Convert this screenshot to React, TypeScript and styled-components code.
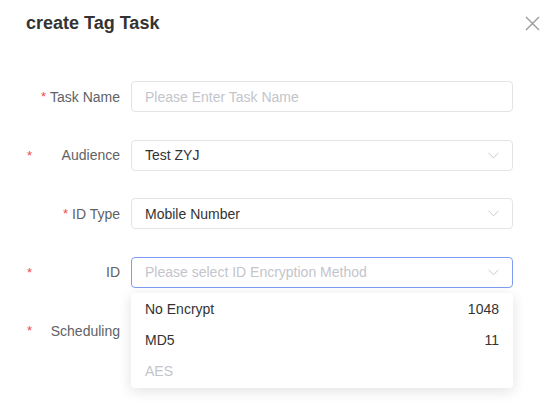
import React from "react";
import styled, { createGlobalStyle } from "styled-components";

const GlobalStyle = createGlobalStyle`
  html, body {
    margin: 0;
    padding: 0;
    background: #ffffff;
  }
  body {
    font-family: "Liberation Sans", Arial, sans-serif;
    -webkit-font-smoothing: antialiased;
  }
  * { box-sizing: border-box; }
`;

const Dialog = styled.div`
  width: 552px;
  height: 411px;
  background: #fff;
  padding: 13px 0 0 26px;
  overflow: hidden;
`;

const Header = styled.div`
  display: flex;
  align-items: center;
  justify-content: space-between;
  padding-right: 12px;
  height: 20px;
`;

const Title = styled.h2`
  margin: 0;
  font-size: 18px;
  font-weight: 700;
  color: #333333;
  line-height: 20px;
`;

const CloseButton = styled.button`
  width: 16px;
  height: 16px;
  border: 0;
  padding: 0;
  background: transparent;
  display: flex;
  align-items: center;
  justify-content: center;
  cursor: pointer;
`;

const Form = styled.div`
  display: flex;
  flex-direction: column;
  gap: 27.6px;
  margin-top: 48px;
`;

const Row = styled.div`
  display: flex;
  align-items: center;
  height: 31px;
`;

const Label = styled.label<{ $spread?: boolean }>`
  width: 94px;
  margin-right: 11px;
  display: flex;
  align-items: center;
  justify-content: ${(p) => (p.$spread ? "space-between" : "flex-end")};
  padding-left: ${(p) => (p.$spread ? "1px" : "0")};
  font-size: 14px;
  color: #606266;
  white-space: nowrap;
`;

const Star = styled.span`
  color: #f04a4a;
  font-size: 13px;
  margin-right: 4px;
`;

const Field = styled.div`
  position: relative;
  width: 382px;
  height: 31px;
`;

const Box = styled.div<{ $focus?: boolean }>`
  height: 100%;
  border: 1px solid ${(p) => (p.$focus ? "#7f9cf5" : "#e3e4e8")};
  border-radius: 4px;
  display: flex;
  align-items: center;
  padding: 0 13px;
  font-size: 14px;
  background: #fff;
`;

const Value = styled.span<{ $placeholder?: boolean }>`
  flex: 1;
  color: ${(p) => (p.$placeholder ? "#c3c5cb" : "#333333")};
`;

const Menu = styled.div`
  position: absolute;
  left: 0;
  right: 0;
  top: 36px;
  background: #fff;
  border-radius: 4px;
  box-shadow: 0 3px 14px rgba(0, 0, 0, 0.12);
  padding: 1px 0;
  z-index: 2;
`;

const Option = styled.div<{ $disabled?: boolean }>`
  height: 31px;
  display: flex;
  align-items: center;
  justify-content: space-between;
  padding: 0 14px;
  font-size: 14px;
  color: ${(p) => (p.$disabled ? "#c3c5cb" : "#333333")};
`;

const Count = styled.span`
  color: #333333;
`;

const Chevron = () => (
  <svg width="11" height="7" viewBox="0 0 11 7" fill="none">
    <path d="M0.5 0.8 L5.5 5.8 L10.5 0.8" stroke="#c8c9cc" strokeWidth="1" />
  </svg>
);

const CloseIcon = () => (
  <svg width="15" height="15" viewBox="0 0 15 15" fill="none">
    <path d="M1 1 L14 14 M14 1 L1 14" stroke="#9a9a9a" strokeWidth="1.4" />
  </svg>
);

const options = [
  { name: "No Encrypt", count: "1048" },
  { name: "MD5", count: "11" },
  { name: "AES", count: "", disabled: true },
];

export default function App() {
  return (
    <>
      <GlobalStyle />
      <Dialog>
        <Header>
          <Title>create Tag Task</Title>
          <CloseButton aria-label="close">
            <CloseIcon />
          </CloseButton>
        </Header>
        <Form>
          <Row>
            <Label>
              <Star>*</Star>Task Name
            </Label>
            <Field>
              <Box>
                <Value $placeholder>Please Enter Task Name</Value>
              </Box>
            </Field>
          </Row>
          <Row>
            <Label $spread>
              <Star>*</Star>Audience
            </Label>
            <Field>
              <Box>
                <Value>Test ZYJ</Value>
                <Chevron />
              </Box>
            </Field>
          </Row>
          <Row>
            <Label>
              <Star>*</Star>ID Type
            </Label>
            <Field>
              <Box>
                <Value>Mobile Number</Value>
                <Chevron />
              </Box>
            </Field>
          </Row>
          <Row>
            <Label $spread>
              <Star>*</Star>ID
            </Label>
            <Field>
              <Box $focus>
                <Value $placeholder>Please select ID Encryption Method</Value>
                <Chevron />
              </Box>
              <Menu>
                {options.map((o) => (
                  <Option key={o.name} $disabled={o.disabled}>
                    <span>{o.name}</span>
                    <Count>{o.count}</Count>
                  </Option>
                ))}
              </Menu>
            </Field>
          </Row>
          <Row>
            <Label $spread>
              <Star>*</Star>Scheduling
            </Label>
            <Field />
          </Row>
        </Form>
      </Dialog>
    </>
  );
}
